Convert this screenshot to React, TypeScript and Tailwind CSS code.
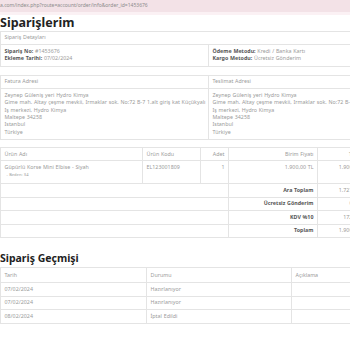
const font = { fontFamily: '"Noto Sans", "Open Sans", sans-serif' };

const cell = "border border-[#e4e4e4] px-[3.5px] py-0 align-middle";
const multi = "border border-[#e4e4e4] px-[3.5px] py-[3px] align-top";

export default function App() {
  return (
    <div className="w-[350px] h-[350px] overflow-hidden bg-white text-[5.3px] leading-[7.4px] text-[#9a9a9a]" style={font}>
      {/* browser url strip */}
      <div className="h-[12px] bg-[#f3e2e7] flex items-center text-[5px] text-[#8c8c8c] whitespace-nowrap">
        a.com/index.php?route=account/order/info&amp;order_id=1453676
      </div>
      <div className="h-[3px] bg-[#fbf1f4]" />

      <h1 className="h-[16px] text-[12.5px] leading-[16px] font-bold text-[#222]">Siparişlerim</h1>

      <div className="w-[372px] tracking-[0.03px] [word-spacing:0.3px]">
        <table className="w-full border-collapse mb-[8px]">
          <thead>
            <tr>
              <td className={cell + " h-[13px]"} colSpan={2}>Sipariş Detayları</td>
            </tr>
          </thead>
          <tbody>
            <tr>
              <td className={multi + " w-[208px]"}>
                <b className="text-[#555]">Sipariş No:</b> #1453676
                <br />
                <b className="text-[#555]">Ekleme Tarihi:</b> 07/02/2024
              </td>
              <td className={multi}>
                <b className="text-[#555]">Ödeme Metodu:</b> Kredi / Banka Kartı
                <br />
                <b className="text-[#555]">Kargo Metodu:</b> Ücretsiz Gönderim
              </td>
            </tr>
          </tbody>
        </table>

        <table className="w-full border-collapse mb-[7px] table-fixed">
          <thead>
            <tr>
              <td className={cell + " h-[13px] w-[208px]"}>Fatura Adresi</td>
              <td className={cell}>Teslimat Adresi</td>
            </tr>
          </thead>
          <tbody>
            <tr>
              <td className={multi + " whitespace-nowrap overflow-hidden"}>
                Zeynep Güleniş yeri Hydro Kimya<br />
                Gime mah. Altay çeşme mevkii, Irmaklar sok. No:72 B-7 1.alt giriş kat Küçükyalı<br />
                Iş merkezi, Hydro Kimya<br />
                Maltepe 34258<br />
                Istanbul<br />
                Türkiye
              </td>
              <td className={multi + " whitespace-nowrap overflow-hidden"}>
                Zeynep Güleniş yeri Hydro Kimya<br />
                Gime mah. Altay çeşme mevkii, Irmaklar sok. No:72 B-7 1.alt giriş kat Küçükyalı<br />
                Iş merkezi, Hydro Kimya<br />
                Maltepe 34258<br />
                Istanbul<br />
                Türkiye
              </td>
            </tr>
          </tbody>
        </table>

        <table className="w-full border-collapse table-fixed">
          <thead>
            <tr>
              <td className={cell + " h-[13px] w-[142px]"}>Ürün Adı</td>
              <td className={cell + " w-[58px]"}>Ürün Kodu</td>
              <td className={cell + " w-[28px] text-right"}>Adet</td>
              <td className={cell + " w-[89px] text-right"}>Birim Fiyatı</td>
              <td className={cell + " text-right"}>Toplam</td>
            </tr>
          </thead>
          <tbody>
            <tr>
              <td className={multi + " h-[23px] whitespace-nowrap"}>
                Güpürlü Korse Mini Elbise - Siyah
                <div className="text-[4px] leading-[6px] pl-[2px]">- Beden: 34</div>
              </td>
              <td className={multi}>EL123001809</td>
              <td className={multi + " text-right"}>1</td>
              <td className={multi + " text-right"}>1.900,00 TL</td>
              <td className={multi + " text-right"}>1.900,00 TL</td>
            </tr>
            {[
              ["Ara Toplam", "1.727,27 TL"],
              ["Ücretsiz Gönderim", "0,00 TL"],
              ["KDV %10", "172,73 TL"],
              ["Toplam", "1.900,00 TL"],
            ].map(([label, value]) => (
              <tr key={label}>
                <td className={cell + " h-[13.5px]"} colSpan={3}></td>
                <td className={cell + " text-right font-bold text-[#555]"}>{label}</td>
                <td className={cell + " text-right"}>{value}</td>
              </tr>
            ))}
          </tbody>
        </table>

        <h2 className="text-[10.5px] leading-[13px] font-bold text-[#222] tracking-normal [word-spacing:0px] mt-[14px] mb-[2px]">Sipariş Geçmişi</h2>

        <table className="w-full border-collapse table-fixed">
          <thead>
            <tr>
              <td className={cell + " h-[15px] w-[146px]"}>Tarih</td>
              <td className={cell + " w-[145px]"}>Durumu</td>
              <td className={cell}>Açıklama</td>
            </tr>
          </thead>
          <tbody>
            {[
              ["07/02/2024", "Hazırlanıyor"],
              ["07/02/2024", "Hazırlanıyor"],
              ["08/02/2024", "İptal Edildi"],
            ].map(([d, s], i) => (
              <tr key={i}>
                <td className={cell + " h-[13.5px]"}>{d}</td>
                <td className={cell}>{s}</td>
                <td className={cell}></td>
              </tr>
            ))}
          </tbody>
        </table>
      </div>
    </div>
  );
}
